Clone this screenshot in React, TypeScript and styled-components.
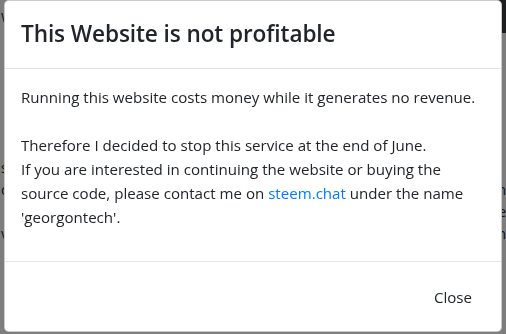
import React from "react";
import styled, { createGlobalStyle } from "styled-components";

const Global = createGlobalStyle`
  html, body { margin: 0; padding: 0; }
  body {
    width: 506px;
    height: 334px;
    overflow: hidden;
    background: #ffffff;
    color: #212529;
    font-family: "Open Sans", "Noto Sans", sans-serif;
  }
`;

const Page = styled.div`
  width: 506px;
  height: 334px;
  display: flex;
  flex-direction: column;
`;

const NavBar = styled.div`
  height: 33px;
  display: flex;
  align-items: center;
  justify-content: space-between;
  padding-left: 1px;
`;

const Brand = styled.span`
  font-size: 13px;
  color: #111;
`;

const DarkButton = styled.div`
  width: 60px;
  height: 33px;
  background: #3a3d40;
`;

const Content = styled.div`
  padding: 102px 0 0 0;
  display: flex;
  flex-direction: column;
  font-size: 14px;
  line-height: 22px;
  color: #212529;
`;

const Row = styled.div`
  display: flex;
  justify-content: space-between;
  padding-left: 1px;
`;

const Glyph = styled.span<{ $blue?: boolean }>`
  color: ${(p) => (p.$blue ? "#0062cc" : "#212529")};
  font-weight: ${(p) => (p.$blue ? 700 : 400)};
`;

const Backdrop = styled.div`
  position: fixed;
  inset: 0;
  background: rgba(0, 0, 0, 0.51);
`;

const ModalWrap = styled.div`
  position: fixed;
  inset: 0;
  display: flex;
  justify-content: center;
  align-items: flex-start;
  padding: 0 4px;
`;

const Dialog = styled.div`
  width: 100%;
  background: #ffffff;
  border: 1px solid rgba(0, 0, 0, 0.2);
  border-radius: 5px;
  display: flex;
  flex-direction: column;
`;

const Header = styled.div`
  padding: 15px 16px 16px;
  border-bottom: 1px solid #e2e5e8;
`;

const Title = styled.h4`
  margin: 0;
  font-size: 22.6px;
  line-height: 36px;
  font-weight: 600;
  color: #212529;
  letter-spacing: -0.1px;
`;

const Body = styled.div`
  padding: 16px;
`;

const Text = styled.p`
  margin: 0 0 16px;
  font-size: 15.1px;
  line-height: 24px;
  color: #212529;
  white-space: nowrap;
`;

const Link = styled.a`
  color: #007bff;
  text-decoration: none;
`;

const Footer = styled.div`
  padding: 16px 16px 15px;
  border-top: 1px solid #e2e5e8;
  display: flex;
  justify-content: flex-end;
`;

const Button = styled.button`
  font-family: inherit;
  font-size: 15.1px;
  line-height: 24px;
  padding: 6px 12px;
  border: 1px solid transparent;
  background: transparent;
  color: #212529;
  border-radius: 4px;
  cursor: pointer;
`;

export default function App() {
  return (
    <>
      <Global />
      <Page>
        <NavBar>
          <Brand>W</Brand>
          <DarkButton />
        </NavBar>
        <Content>
          <Row>
            <Glyph />
            <Glyph $blue>▌</Glyph>
          </Row>
          <Row>
            <Glyph />
            <Glyph />
          </Row>
          <Row>
            <Glyph>s</Glyph>
            <Glyph />
          </Row>
          <Row>
            <Glyph>c</Glyph>
            <Glyph>n</Glyph>
          </Row>
          <Row>
            <Glyph />
            <Glyph>e</Glyph>
          </Row>
          <Row>
            <Glyph>v</Glyph>
            <Glyph>n</Glyph>
          </Row>
        </Content>
      </Page>
      <Backdrop />
      <ModalWrap>
        <Dialog>
          <Header>
            <Title>This Website is not profitable</Title>
          </Header>
          <Body>
            <Text>
              Running this website costs money while it generates no revenue.
              <br />
              <br />
              Therefore I decided to stop this service at the end of June.
              <br />
              If you are interested in continuing the website or buying the
              <br />
              source code, please contact me on <Link href="#">steem.chat</Link> under the name
              <br />
              'georgontech'.
            </Text>
          </Body>
          <Footer>
            <Button>Close</Button>
          </Footer>
        </Dialog>
      </ModalWrap>
    </>
  );
}
